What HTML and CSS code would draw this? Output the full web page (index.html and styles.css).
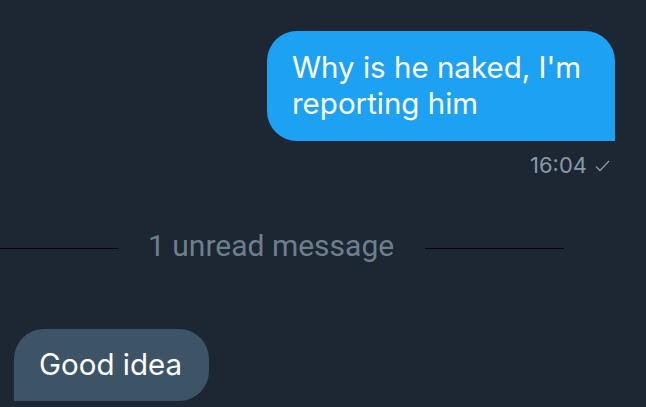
FILE: index.html
```html
<!DOCTYPE html>
<html>
<head>
<meta charset="utf-8">
<link rel="stylesheet" href="styles.css">
</head>
<body>
<div class="chat">
  <div class="row out">
    <div class="msg-out">
      <div class="bubble blue">Why is he naked, I'm reporting him</div>
      <div class="meta">16:04 <svg class="check" width="15" height="12" viewBox="0 0 15 12"><path d="M1 6.5 L5 10.5 L14 1" fill="none" stroke="#8899a6" stroke-width="1.3"/></svg></div>
    </div>
  </div>
  <div class="divider">
    <span class="line left"></span>
    <span class="label">1 unread message</span>
    <span class="line right"></span>
  </div>
  <div class="row in">
    <div class="bubble gray">Good idea</div>
  </div>
</div>
</body>
</html>
```
FILE: styles.css
```css
html, body {
  margin: 0;
  padding: 0;
  background: #1c2733;
  height: 100%;
  overflow: hidden;
}
.chat {
  display: flex;
  flex-direction: column;
  font-family: Inter, "Noto Sans", sans-serif;
  padding-top: 31px;
}
.row {
  display: flex;
}
.row.out {
  justify-content: flex-end;
  padding-right: 31px;
}
.msg-out {
  display: flex;
  flex-direction: column;
  align-items: flex-end;
}
.bubble {
  color: #ffffff;
  font-size: 29.5px;
  line-height: 36px;
}
.bubble.blue {
  background: #1da1f2;
  width: 348px;
  box-sizing: border-box;
  padding: 18px 20px 20px 25px;
  border-radius: 30px 30px 0 30px;
}
.meta {
  display: flex;
  align-items: center;
  gap: 8px;
  color: #8899a6;
  font-size: 22px;
  line-height: 26px;
  margin-top: 11px;
  padding-right: 5px;
}
.check {
  display: block;
  margin-top: 2px;
}
.divider {
  display: flex;
  align-items: flex-start;
  margin-top: 53px;
  height: 30px;
}
.line {
  display: block;
  height: 1px;
  margin-top: 17px;
  background: #000000;
}
.line.left {
  width: 118px;
}
.line.right {
  width: 139px;
}
.label {
  color: #6e7f8c;
  font-family: Roboto, sans-serif;
  font-size: 30px;
  line-height: 30px;
  padding: 0 31px 0 30px;
}
.row.in {
  padding-left: 14px;
  margin-top: 68px;
}
.bubble.gray {
  background: #3d5466;
  padding: 17px 27px 19px 25px;
  border-radius: 30px 30px 30px 0;
}
```
